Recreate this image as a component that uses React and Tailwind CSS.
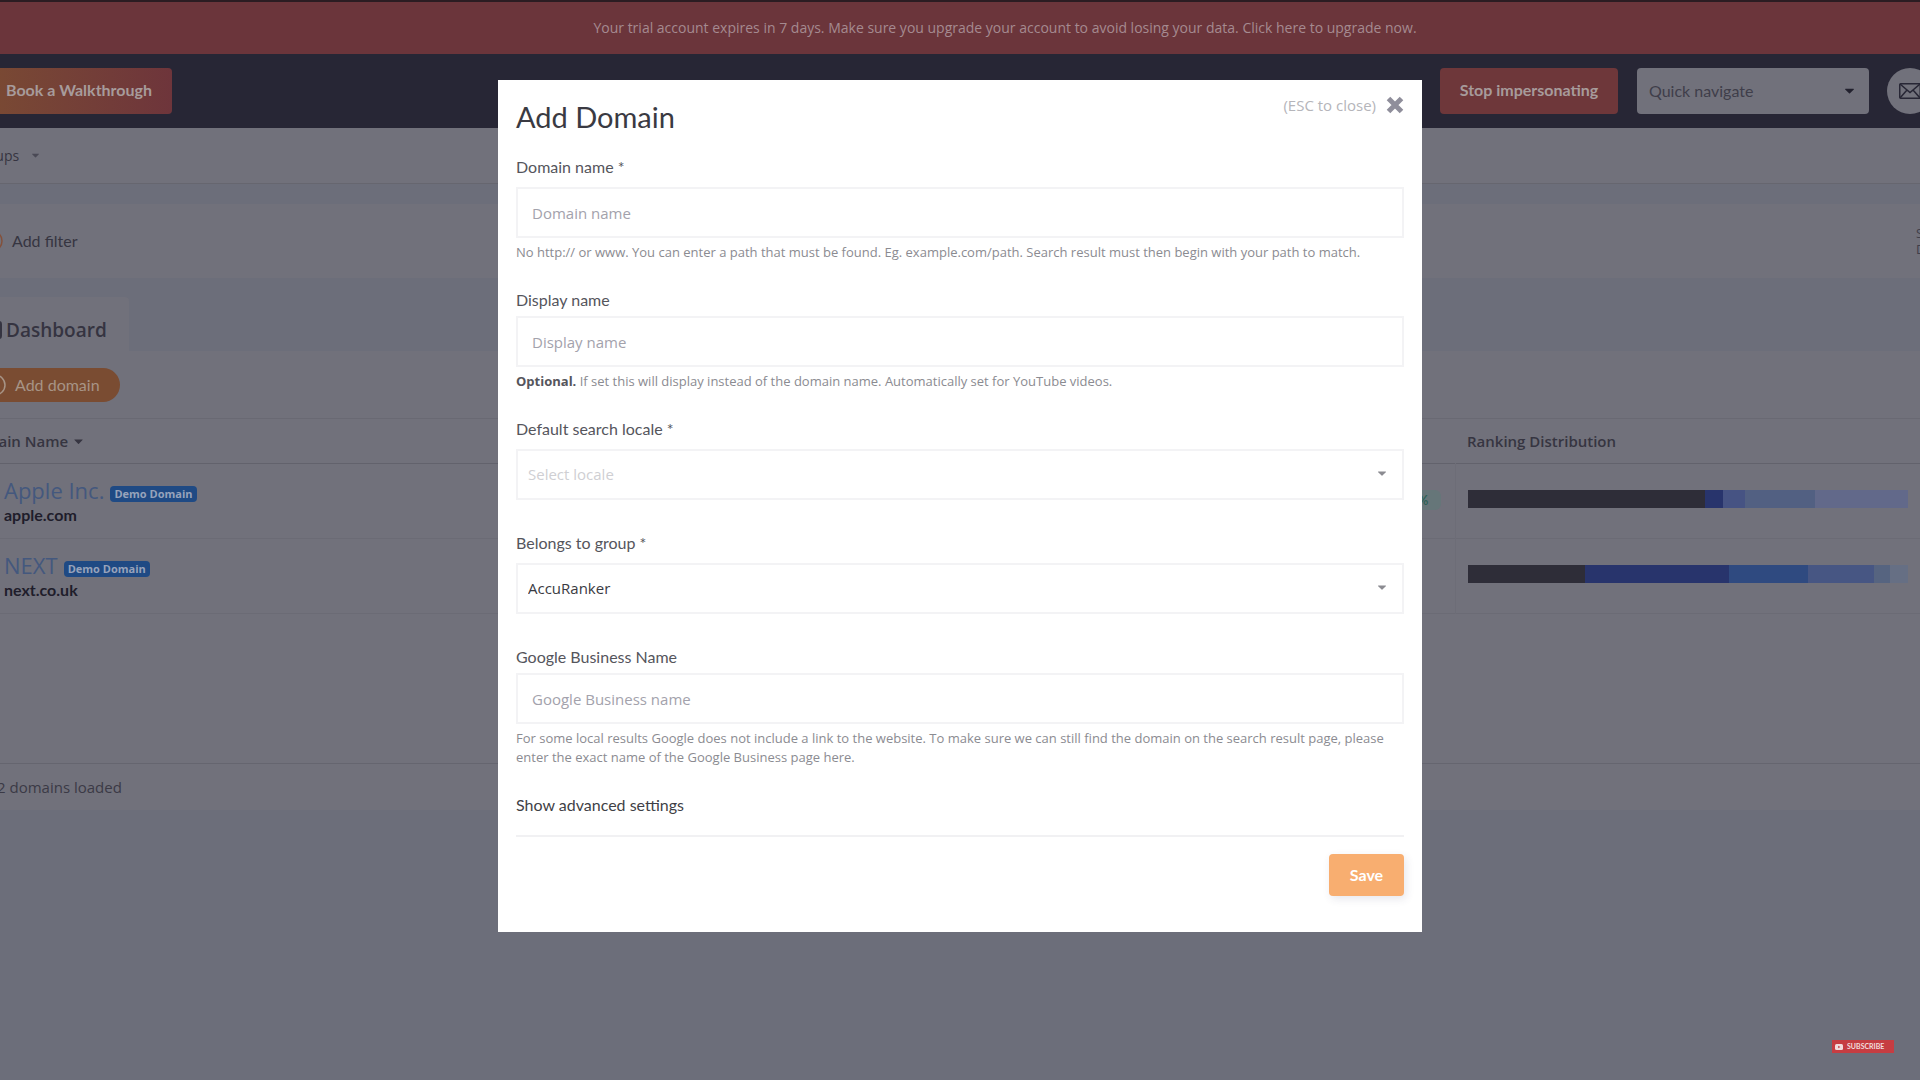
import { useState } from 'react';

const DOMAINS = [
  {
    id: 'apple',
    name: 'Apple Inc.',
    url: 'apple.com',
    change: '0.4%',
    distribution: [
      { share: 711, color: 'bg-[#2e2d38]' },
      { share: 54, color: 'bg-[#28346c]' },
      { share: 65, color: 'bg-[#465383]' },
      { share: 210, color: 'bg-[#526082]' },
      { share: 278, color: 'bg-[#62698a]' },
    ],
  },
  {
    id: 'next',
    name: 'NEXT',
    url: 'next.co.uk',
    change: null,
    distribution: [
      { share: 352, color: 'bg-[#2e2d38]' },
      { share: 431, color: 'bg-[#28346c]' },
      { share: 235, color: 'bg-[#2f4a80]' },
      { share: 197, color: 'bg-[#475683]' },
      { share: 50, color: 'bg-[#566480]' },
      { share: 53, color: 'bg-[#666f84]' },
    ],
  },
];

const INPUT_CLASS =
  'block h-[51px] w-full border-2 border-[#f3f3f5] bg-white px-[14px] font-["Open_Sans",sans-serif] text-[15px] text-[#3a3a42] placeholder:text-[#a3a2ac] focus:outline-none';

function Caret({ className }) {
  return (
    <svg viewBox="0 0 10 6" className={className} fill="currentColor" aria-hidden="true">
      <path d="M0.6 0.5h8.8c.5 0 .7.5.4.8L5.5 5.6a.7.7 0 0 1-1 0L.2 1.3C-.1 1 .1.5.6.5z" />
    </svg>
  );
}

function PlusCircle({ className }) {
  return (
    <svg viewBox="0 0 22 22" className={className} fill="none" stroke="currentColor" strokeWidth="1.5" aria-hidden="true">
      <circle cx="11" cy="11" r="10" />
      <path d="M11 6v10M6 11h10" />
    </svg>
  );
}

function DistributionBar({ segments }) {
  return (
    <div className="flex h-[18px] w-full">
      {segments.map((segment, index) => (
        <div key={index} className={segment.color} style={{ flexGrow: segment.share }} />
      ))}
    </div>
  );
}

function Field({ id, label, required, help, children }) {
  return (
    <div className={help ? 'pb-[26px]' : 'pb-[31px]'}>
      <label htmlFor={id} className={`block text-base leading-6 text-[#55555c] ${required ? 'mb-2' : 'mb-1'}`}>
        {label}
        {required ? ' *' : ''}
      </label>
      {children}
      {help ? (
        <p className="mt-[5px] font-['Open_Sans',sans-serif] text-[13px] leading-[19px] text-[#8b8b91]">{help}</p>
      ) : null}
    </div>
  );
}

function SelectBox({ id, value, muted }) {
  return (
    <div className="relative">
      <select
        id={id}
        defaultValue={value}
        className={`block h-[51px] w-full appearance-none border-2 border-[#f3f3f5] bg-white px-[10px] font-["Open_Sans",sans-serif] text-[15px] focus:outline-none ${
          muted ? 'text-[#cfcfd3]' : 'text-[#3a3a42]'
        }`}
      >
        <option>{value}</option>
      </select>
      <Caret className="pointer-events-none absolute top-[22px] right-[18px] h-[5px] w-2 text-[#8b8b91]" />
    </div>
  );
}

function Dashboard() {
  return (
    <div className="-mr-8 -ml-16">
      <div className="h-[2px] bg-[#2b1c22]" />
      <div className="flex h-[52px] items-center justify-center bg-[#6b353b] pb-[2px] pl-[122px]">
        <a href="#upgrade" className="font-['Open_Sans',sans-serif] text-[14px] text-[#a58a90]">
          Your trial account expires in 7 days. Make sure you upgrade your account to avoid losing your data. Click here to upgrade now.
        </a>
      </div>

      <header className="flex h-[74px] items-center bg-[#272635] pr-[19px] pl-[50px]">
        <button
          type="button"
          className="h-[46px] rounded-[4px] bg-linear-to-r from-[#7a4a33] to-[#6e353b] px-5 pb-[3px] text-base font-bold text-[#a79b9b]"
        >
          Book a Walkthrough
        </button>
        <button
          type="button"
          className="ml-auto h-[46px] w-[178px] rounded-[4px] bg-[#6e373a] pb-[3px] text-base font-bold text-[#a79b9b]"
        >
          Stop impersonating
        </button>
        <div className="relative ml-[19px] w-[232px]">
          <select
            aria-label="Quick navigate"
            className="h-[46px] w-full appearance-none rounded-[4px] bg-[#71717b] px-3 text-base text-[#3f3e4a]"
          >
            <option>Quick navigate</option>
          </select>
          <Caret className="pointer-events-none absolute top-5 right-[15px] h-[6px] w-[9px] text-[#22212e]" />
        </div>
        <button
          type="button"
          aria-label="Messages"
          className="ml-[18px] flex size-[46px] items-center justify-center rounded-full bg-[#71717b]"
        >
          <svg viewBox="0 0 22 16" className="h-4 w-[22px] text-[#272635]" fill="none" stroke="currentColor" strokeWidth="1.5">
            <rect x="0.75" y="0.75" width="20.5" height="14.5" rx="1" />
            <path d="M1 1l10 8.500L21 1M1 15l7-8M21 15l-7-8" />
          </svg>
        </button>
      </header>

      <nav className="flex h-14 items-center border-b border-[#66666f] bg-[#71717b] pl-[35px]">
        <a href="#groups" className="flex items-center gap-[13px] font-['Open_Sans',sans-serif] text-[14px] text-[#363541]">
          Groups
          <Caret className="h-[5px] w-[7px] text-[#4a4955]" />
        </a>
      </nav>

      <div className="mt-5 flex h-[74px] items-center justify-between bg-[#71717b] pr-6 pl-[45px]">
        <button type="button" className="flex items-center gap-[9px] text-base text-[#363541]">
          <PlusCircle className="size-[22px] text-[#84503a]" />
          Add filter
        </button>
        <div className="font-['Open_Sans',sans-serif] text-[13px] leading-4 text-[#3f3e4a]">
          <div className="w-3">S</div>
          <div className="w-3">D</div>
        </div>
      </div>

      <div className="mt-[19px] flex">
        <a
          href="#dashboard"
          className="flex h-[54px] w-[193px] items-center gap-1 rounded-tr-[4px] bg-[#71717b] pt-3 pl-[46px] font-['Open_Sans',sans-serif] text-[19px] font-semibold text-[#353441]"
        >
          <svg viewBox="0 0 20 20" className="size-5" fill="none" stroke="currentColor" strokeWidth="2">
            <rect x="1" y="2" width="18" height="16" rx="2" />
            <path d="M5 14V9M10 14V6M15 14v-3" />
          </svg>
          Dashboard
        </a>
      </div>

      <main className="bg-[#71717b]">
        <div className="flex h-[67px] items-center pl-[38px]">
          <button
            type="button"
            className="flex h-[34px] items-center gap-[9px] rounded-full bg-[#7a4c32] pr-5 pl-[10px] text-base text-[#a79486]"
          >
            <PlusCircle className="size-[22px]" />
            Add domain
          </button>
        </div>

        <table className="w-full table-fixed border-collapse text-left">
          <colgroup>
            <col />
            <col className="w-[300px]" />
            <col className="w-[497px]" />
          </colgroup>
          <thead>
            <tr className="h-[45px] border-t border-b border-[#696973] border-b-[#62626c] font-['Open_Sans',sans-serif] text-[15px] text-[#363541]">
              <th className="pl-7 font-semibold">
                <span className="flex items-center gap-[6px]">
                  Domain Name
                  <Caret className="h-[5px] w-[9px]" />
                </span>
              </th>
              <th aria-label="Change" />
              <th className="pl-3 font-semibold">Ranking Distribution</th>
            </tr>
          </thead>
          <tbody>
            {DOMAINS.map((domain) => (
              <tr key={domain.id} className="h-[75px] border-b border-[#6b6b75]">
                <td className="pl-[68px]">
                  <div className="flex items-center gap-[6px]">
                    <a href={`#${domain.id}`} className="font-['Open_Sans',sans-serif] text-[22px] leading-7 text-[#44587e]">
                      {domain.name}
                    </a>
                    <span className="mt-2 rounded-[4px] bg-[#1f4a84] px-1 font-['Open_Sans',sans-serif] text-[11px] leading-4 font-bold text-[#97a3bb]">
                      Demo Domain
                    </span>
                  </div>
                  <div className="text-base leading-[22px] font-bold text-[#1f1d2b]">{domain.url}</div>
                </td>
                <td className="pr-[14px] pb-1 text-right">
                  {domain.change ? (
                    <span className="inline-block rounded-[6px] bg-[#667679] px-3 text-[13px] leading-5 font-bold text-[#2f6257]">
                      {domain.change}
                    </span>
                  ) : null}
                </td>
                <td className="border-l border-[#6d6d77] pr-11 pb-1 pl-3">
                  <DistributionBar segments={domain.distribution} />
                </td>
              </tr>
            ))}
          </tbody>
        </table>

        <div className="mt-[149px] flex h-[47px] items-center border-t border-[#65656f] pl-[61px] font-['Open_Sans',sans-serif] text-[15px] text-[#3b3a46]">
          2 domains loaded
        </div>
      </main>
    </div>
  );
}

function AddDomainDialog({ onClose }) {
  return (
    <div className="fixed inset-0 flex items-start justify-center overflow-y-auto pt-20">
      <form
        role="dialog"
        aria-labelledby="add-domain-title"
        onSubmit={(event) => event.preventDefault()}
        className="w-full max-w-[924px] bg-white px-[18px] pb-9"
      >
        <div className="flex items-start justify-between pt-[9px] pb-[22px]">
          <h1 id="add-domain-title" className="pt-3 text-[29px] leading-8 text-[#3a3a42]">
            Add Domain
          </h1>
          <button
            type="button"
            onClick={onClose}
            className="flex items-center gap-[10px] font-['Open_Sans',sans-serif] text-[15px] leading-8 text-[#b5b5ba]"
          >
            (ESC to close)
            <svg viewBox="0 0 18 18" className="size-[18px] text-[#8f8e9b]" fill="none" stroke="currentColor" strokeWidth="5" aria-hidden="true">
              <path d="M2.500 2.500l13 13M15.500 2.500l-13 13" />
            </svg>
          </button>
        </div>

        <Field
          id="domain"
          label="Domain name"
          required
          help="No http:// or www. You can enter a path that must be found. Eg. example.com/path. Search result must then begin with your path to match."
        >
          <input id="domain" type="text" placeholder="Domain name" className={INPUT_CLASS} />
        </Field>

        <Field
          id="display"
          label="Display name"
          help={
            <>
              <strong className="text-[#55555c]">Optional.</strong> If set this will display instead of the domain name. Automatically set for YouTube videos.
            </>
          }
        >
          <input id="display" type="text" placeholder="Display name" className={INPUT_CLASS} />
        </Field>

        <Field id="locale" label="Default search locale" required>
          <SelectBox id="locale" value="Select locale" muted />
        </Field>

        <Field id="group" label="Belongs to group" required>
          <SelectBox id="group" value="AccuRanker" />
        </Field>

        <Field
          id="business"
          label="Google Business Name"
          help="For some local results Google does not include a link to the website. To make sure we can still find the domain on the search result page, please enter the exact name of the Google Business page here."
        >
          <input id="business" type="text" placeholder="Google Business name" className={INPUT_CLASS} />
        </Field>

        <button type="button" className="block text-base leading-6 text-[#3f3f46]">
          Show advanced settings
        </button>

        <div className="mt-[18px] flex justify-end border-t-2 border-[#f1f1f3] pt-[17px]">
          <button
            type="submit"
            className="h-[42px] w-[75px] rounded-[4px] bg-[#f8ae70] text-base font-bold text-white shadow-[2px_3px_8px_rgba(60,60,100,0.12)]"
          >
            Save
          </button>
        </div>
      </form>
    </div>
  );
}

export default function App() {
  const [open, setOpen] = useState(true);

  return (
    <div className="min-h-screen overflow-hidden bg-[#6c6e7a] font-[Lato,sans-serif]">
      <Dashboard />
      {open ? <AddDomainDialog onClose={() => setOpen(false)} /> : null}
      <a
        href="#subscribe"
        className="fixed right-[26px] bottom-[27px] flex h-[13px] w-[62px] items-center gap-1 bg-[#c63d42] pl-[3px] text-[7px] font-bold text-[#f1dcdd]"
      >
        <svg viewBox="0 0 8 6" className="h-[6px] w-2" aria-hidden="true">
          <rect width="8" height="6" rx="1.5" fill="#f1dcdd" />
          <path d="M3.200 1.700v2.600L5.400 3z" fill="#c63d42" />
        </svg>
        SUBSCRIBE
      </a>
    </div>
  );
}
